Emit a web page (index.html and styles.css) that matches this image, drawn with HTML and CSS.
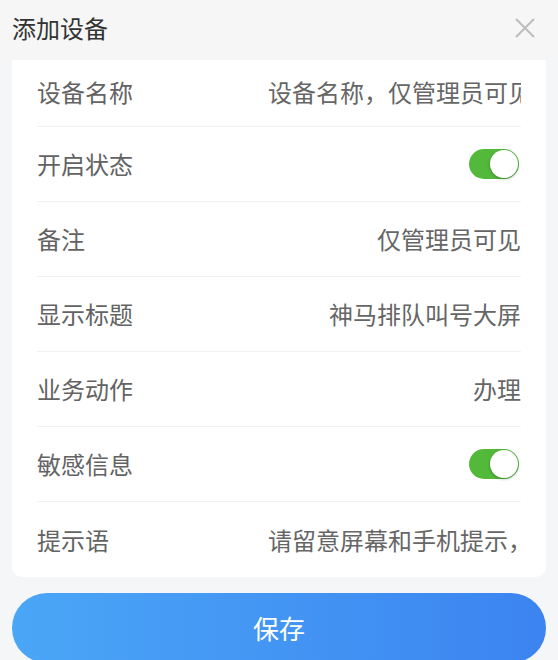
FILE: index.html
```html
<!DOCTYPE html>
<html lang="zh-CN">
<head>
  <meta charset="UTF-8" />
  <meta name="viewport" content="width=device-width, initial-scale=1" />
  <title>添加设备</title>
  <link rel="stylesheet" href="styles.css">
</head>
<body>

  <div class="header">
    <h2>添加设备</h2>
    <span class="close">
      <svg width="22" height="22" viewBox="0 0 22 22">
        <path d="M2 2 L20 20 M20 2 L2 20" stroke="#bdbdbd" stroke-width="2" fill="none" />
      </svg>
    </span>
  </div>

  <div class="card">
    <div class="row first">
      <span class="label">设备名称</span>
      <span class="value">设备名称，仅管理员可见</span>
    </div>
    <div class="row">
      <span class="label">开启状态</span>
      <span class="switch on"><span class="knob"></span></span>
    </div>
    <div class="row">
      <span class="label">备注</span>
      <span class="value">仅管理员可见</span>
    </div>
    <div class="row">
      <span class="label">显示标题</span>
      <span class="value">神马排队叫号大屏</span>
    </div>
    <div class="row">
      <span class="label">业务动作</span>
      <span class="value">办理</span>
    </div>
    <div class="row">
      <span class="label">敏感信息</span>
      <span class="switch on"><span class="knob"></span></span>
    </div>
    <div class="row">
      <span class="label">提示语</span>
      <span class="value">请留意屏幕和手机提示，请按时到达窗口</span>
    </div>
  </div>

  <button class="save">保存</button>

</body>
</html>
```

FILE: styles.css
```css
body {
  margin: 0;
  background: #f5f6f8;
  font-family: "Noto Sans CJK SC", "Noto Sans", sans-serif;
  width: 558px;
  height: 660px;
  overflow: hidden;
}
.header {
  height: 60px;
  background: #f6f6f6;
  display: flex;
  align-items: center;
  justify-content: space-between;
  padding: 0 22px 0 12px;
}
.header h2 {
  margin: 0 0 4px;
  font-size: 24px;
  font-weight: 400;
  color: #333;
  line-height: 1;
}
.close {
  display: flex;
  margin-top: -4px;
}
.card {
  margin: 0 12px;
  background: white;
  border-radius: 0 0 10px 10px;
  padding: 0 25px;
}
.row {
  height: 74px;
  display: flex;
  align-items: center;
  justify-content: space-between;
  border-bottom: 1px solid #f1f1f1;
}
.row.first {
  box-sizing: border-box;
  height: 67px;
  align-items: flex-start;
}
.row.first .label {
  margin-top: 20px;
}
.row.first .value {
  margin-top: 14px;
}
.row:last-child {
  border-bottom: none;
  height: 75px;
}
.label {
  font-size: 24px;
  color: #636363;
  line-height: 1;
  white-space: nowrap;
}
.value {
  width: 253px;
  font-size: 24px;
  color: #666;
  line-height: 1.5;
  text-align: right;
  white-space: nowrap;
  overflow: hidden;
}
.switch {
  width: 50px;
  height: 30px;
  border-radius: 15px;
  background: #52b93b;
  position: relative;
  margin-right: 2px;
}
.switch .knob {
  position: absolute;
  top: 1px;
  right: 1px;
  width: 28px;
  height: 28px;
  border-radius: 50%;
  background: white;
  box-shadow: 0 1px 3px rgba(0,0,0,0.3);
}
.save {
  display: block;
  margin: 16px 12px 0;
  width: 534px;
  height: 70px;
  border: none;
  border-radius: 35px;
  background: linear-gradient(90deg, #4ba6f6, #3b84f1);
  color: white;
  font-family: "Noto Sans CJK SC", sans-serif;
  font-size: 26px;
  padding-bottom: 2px;
  cursor: pointer;
}
```
